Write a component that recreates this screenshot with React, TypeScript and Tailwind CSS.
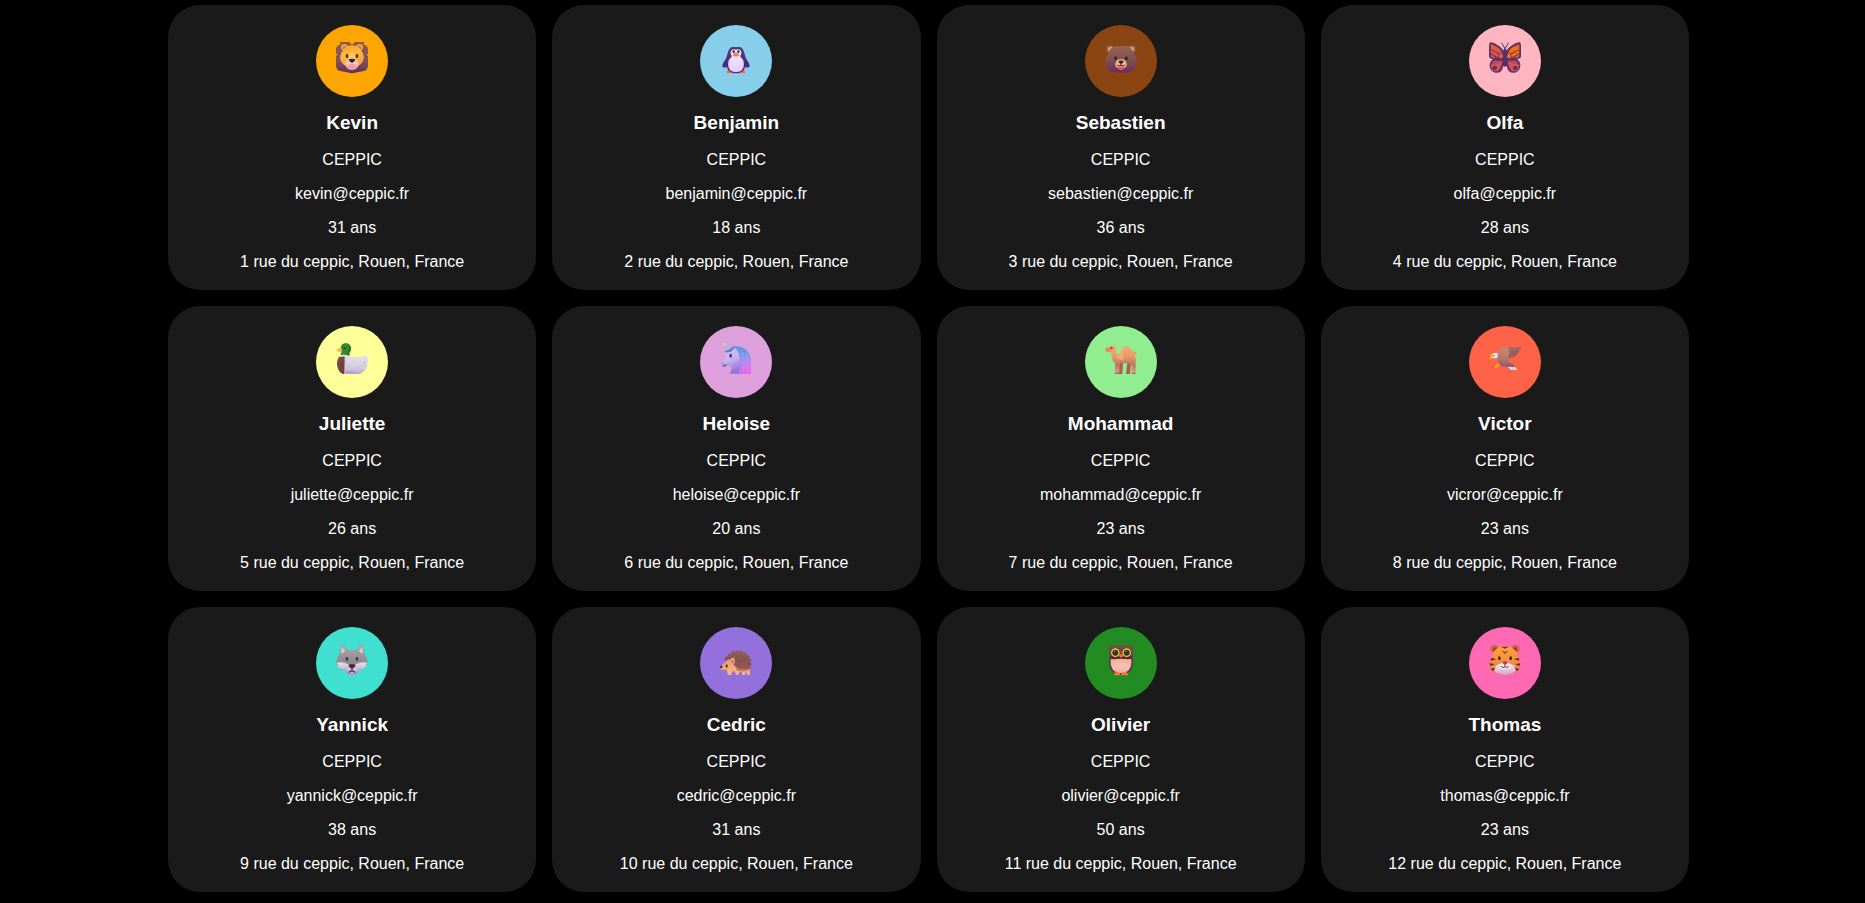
import type { ReactNode } from "react";

function Svg({ label, children }: { label: string; children: ReactNode }) {
  return (
    <svg viewBox="0 0 96 96" className="size-8" role="img" aria-label={label}>
      {children}
    </svg>
  );
}

type Stop = [string, string];

function Gradient({ id, stops, x2 = 0, y2 = 1 }: { id: string; stops: Stop[]; x2?: number; y2?: number }) {
  return (
    <linearGradient id={id} x1="0" y1="0" x2={x2} y2={y2}>
      {stops.map(([offset, color]) => (
        <stop key={offset} offset={offset} stopColor={color} />
      ))}
    </linearGradient>
  );
}

function Lion() {
  return (
    <Svg label="Lion">
      <Gradient id="lion-mane" stops={[["0", "#8a5a50"], ["0.6", "#83535a"], ["1", "#5f2f5e"]]} />
      <Gradient id="lion-face" stops={[["0", "#f2a02c"], ["0.5", "#ffb83c"], ["1", "#f79f3d"]]} x2={0.3} />
      <path d="M12 0H40L48 7L56 0H84V9Q94 10 96 20V35L90 38L96 41V72Q94 86 80 88Q70 89 64 91Q48 96 32 91Q26 89 16 88Q2 86 0 72V41L6 38L0 35V20Q2 10 12 9Z" fill="url(#lion-mane)" />
      <path d="M40 0L48 9L56 0Z" fill="#ffa500" />
      <circle cx="25" cy="16" r="10" fill="#f2a23c" />
      <circle cx="71" cy="16" r="10" fill="#f2a23c" />
      <circle cx="26" cy="18" r="5" fill="#c96f3e" />
      <circle cx="70" cy="18" r="5" fill="#c96f3e" />
      <path d="M48 10C66 9 78 23 83 42C85 53 79 66 66 72Q48 82 30 72C17 66 11 53 13 42C18 23 30 9 48 10Z" fill="url(#lion-face)" />
      <path d="M44 30Q48 27 52 30L59 55H37Z" fill="#ffc96a" />
      <ellipse cx="48" cy="67" rx="20" ry="17" fill="#f4b6ad" />
      <path d="M28 66Q30 51 48 53Q66 51 68 66Q48 74 28 66Z" fill="#f8c8bd" />
      <ellipse cx="48" cy="74" rx="12" ry="8" fill="#f29ba4" />
      <path d="M38 52Q48 48 58 52Q58 58 48 63Q38 58 38 52Z" fill="#34202f" />
      <ellipse cx="33" cy="42" rx="4" ry="6" fill="#4a2b2b" />
      <ellipse cx="63" cy="42" rx="4" ry="6" fill="#4a2b2b" />
    </Svg>
  );
}

function Penguin() {
  return (
    <Svg label="Penguin">
      <Gradient id="penguin-body" stops={[["0", "#573c78"], ["0.5", "#4c2c80"], ["1", "#4a1f86"]]} />
      <Gradient id="penguin-belly" stops={[["0", "#f8f2fc"], ["1", "#e2cdfa"]]} />
      <path d="M20 94Q20 84 29 82H67Q76 84 76 94Z" fill="#ff6e36" />
      <path d="M36 15H60Q69 18 72 30Q75 48 86 62Q91 72 87 76Q80 78 75 74Q74 92 48 94Q22 92 21 74Q16 78 9 76Q5 72 10 62Q21 48 24 30Q27 18 36 15Z" fill="url(#penguin-body)" />
      <path d="M48 23Q60 18 64 29Q65 37 60 43L70 55Q75 77 63 87Q48 94 33 87Q21 77 26 55L36 43Q31 37 32 29Q36 18 48 23Z" fill="url(#penguin-belly)" />
      <path d="M36 39Q48 45 60 39L63 43Q48 48 33 43Z" fill="#d9c5e9" />
      <circle cx="41" cy="29" r="4" fill="#433052" />
      <circle cx="55" cy="29" r="4" fill="#433052" />
      <path d="M38 38Q40 33 48 32Q56 33 58 38Q56 43 48 43Q40 43 38 38Z" fill="#ff7936" />
    </Svg>
  );
}

function Bear() {
  return (
    <Svg label="Bear">
      <Gradient id="bear-head" stops={[["0", "#966456"], ["0.55", "#7e504f"], ["1", "#6c2b68"]]} />
      <circle cx="15" cy="21" r="12" fill="#8d5c52" />
      <circle cx="81" cy="21" r="12" fill="#8d5c52" />
      <circle cx="17" cy="22" r="8" fill="#ec9d67" />
      <circle cx="79" cy="22" r="8" fill="#ec9d67" />
      <path d="M30 13H66Q79 15 86 33Q96 46 96 61Q95 81 80 88Q69 92 48 92Q27 92 16 88Q1 81 0 61Q0 46 10 33Q17 15 30 13Z" fill="url(#bear-head)" />
      <path d="M48 52Q63 52 65 65Q66 76 55 79Q48 81 41 79Q30 76 31 65Q33 52 48 52Z" fill="#f3b780" />
      <ellipse cx="32" cy="49" rx="4" ry="6" fill="#362136" />
      <ellipse cx="64" cy="49" rx="4" ry="6" fill="#362136" />
      <path d="M40 58Q48 53 56 58Q54 64 48 66Q42 64 40 58Z" fill="#321f2e" />
      <path d="M48 64V71M36 69Q42 75 48 70Q54 75 60 69" stroke="#4b2530" strokeWidth="3" fill="none" />
      <path d="M38 75Q48 73 58 75Q57 84 48 84Q39 84 38 75Z" fill="#e05b73" />
    </Svg>
  );
}

function Butterfly() {
  return (
    <Svg label="Butterfly">
      <Gradient id="butterfly-left" stops={[["0", "#f06040"], ["1", "#d84c50"]]} />
      <Gradient id="butterfly-right" stops={[["0", "#f04e45"], ["0.5", "#ff7200"], ["1", "#e45a3c"]]} />
      <path d="M48 20L58 3M48 20L38 3" stroke="#59366f" strokeWidth="3" strokeLinecap="round" />
      <path d="M5 0Q17 2 29 11Q40 18 44 27H52Q56 18 67 11Q79 2 91 0Q96 2 96 10V42Q96 50 84 52Q94 58 94 70Q94 88 78 92H70Q57 92 53 72H43Q39 92 26 92H18Q2 88 2 70Q2 58 12 52Q0 50 0 42V10Q0 2 5 0Z" fill="#593665" />
      <path d="M5 6Q27 14 37 27L33 36L5 22Z" fill="url(#butterfly-left)" />
      <path d="M5 25L31 38L25 46L5 32Z" fill="url(#butterfly-left)" />
      <path d="M5 35L21 47H9Q4 44 5 35Z" fill="#df5049" />
      <path d="M37 30L43 46Q37 52 28 46Z" fill="#ed583c" />
      <path d="M91 6Q69 14 59 27L63 36L91 22Z" fill="url(#butterfly-right)" />
      <path d="M91 25L65 38L71 46L91 32Z" fill="#ff7100" />
      <path d="M91 35L75 47H87Q92 44 91 35Z" fill="#e85b43" />
      <path d="M59 30L53 46Q59 52 68 46Z" fill="#ff6812" />
      <path d="M40 56Q38 76 27 87Q9 92 6 74Q5 61 18 56Z" fill="#e14e54" />
      <path d="M56 56Q58 76 69 87Q87 92 90 74Q91 61 78 56Z" fill="#e14e54" />
      <path d="M8 66L38 57M88 66L58 57" stroke="#704061" strokeWidth="2" />
      <circle cx="17" cy="78" r="7" fill="#593665" />
      <circle cx="79" cy="78" r="7" fill="#593665" />
      <path d="M43 24Q48 17 53 24L54 68Q52 74 48 74Q44 74 42 68Z" fill="#4e336c" />
    </Svg>
  );
}

function Duck() {
  return (
    <Svg label="Duck">
      <Gradient id="duck-body" stops={[["0", "#e7e1eb"], ["0.7", "#d4cadd"], ["1", "#b8a2cc"]]} />
      <Gradient id="duck-breast" stops={[["0", "#82513f"], ["1", "#61343f"]]} x2={1} />
      <path d="M12 39Q2 49 3 65Q6 87 21 93H37V39Z" fill="url(#duck-breast)" />
      <path d="M26 41H70Q82 42 85 38Q92 35 95 43Q97 62 91 74Q84 88 71 93H25Z" fill="url(#duck-body)" />
      <path d="M28 45Q27 71 44 75Q74 80 89 55" fill="none" stroke="#c9bcd5" strokeWidth="2" />
      <path d="M24 84Q49 80 71 93H24Z" fill="#b7a2cb" />
      <path d="M30 0Q44 2 45 17Q44 23 40 29V40H14Q13 31 17 26L14 14Q16 1 30 0Z" fill="#338c27" />
      <path d="M35 3Q43 14 34 26V39H40V29Q45 25 45 17Q45 6 35 3Z" fill="#2a7528" />
      <path d="M13 11L18 19L15 27Q9 28 3 24Q-1 20 2 18L8 17Z" fill="#f8bd48" />
      <circle cx="25" cy="16" r="3" fill="#203c21" />
      <path d="M12 37Q22 33 40 38V43Q21 39 11 42Z" fill="#f0eaf0" />
    </Svg>
  );
}

function Unicorn() {
  return (
    <Svg label="Unicorn">
      <Gradient id="unicorn-mane" stops={[["0", "#5292dc"], ["0.3", "#7b9ced"], ["0.6", "#c784ee"], ["1", "#f25fe6"]]} />
      <Gradient id="unicorn-face" stops={[["0", "#d9cdf6"], ["0.6", "#c5b0ee"], ["1", "#9279d8"]]} x2={0.3} />
      <Gradient id="unicorn-horn" stops={[["0", "#ffe15a"], ["0.45", "#67d9cc"], ["0.7", "#f0a0c8"], ["1", "#6c8be9"]]} x2={1} />
      <path d="M44 10Q68 10 81 23Q93 36 93 56V93H50Q58 68 46 34Z" fill="url(#unicorn-mane)" />
      <path d="M36 22L39 10L48 19Q61 33 59 57L56 93H29Q36 82 33 70Q26 67 20 70Q12 76 5 71Q-1 66 3 60L14 49L20 33Q26 23 36 22Z" fill="url(#unicorn-face)" />
      <path d="M8 0Q12 -2 16 1L31 17L22 23Z" fill="url(#unicorn-horn)" />
      <path d="M35 14Q28 22 14 24Q17 29 25 28Q34 28 39 20L46 10Q40 9 35 14Z" fill="#4a86d8" />
      <path d="M48 10Q63 26 63 52Q64 70 58 93" fill="none" stroke="#8a93ee" strokeWidth="5" opacity=".6" />
      <path d="M68 28Q74 62 70 93M79 33Q86 62 82 93" fill="none" stroke="#b79bf2" strokeWidth="3" opacity=".6" />
      <ellipse cx="32" cy="38" rx="4" ry="6" fill="#453763" />
      <ellipse cx="8" cy="61" rx="3" ry="2" fill="#8453b5" />
      <path d="M8 69Q18 70 20 63" fill="none" stroke="#533771" strokeWidth="3" />
    </Svg>
  );
}

function Camel() {
  return (
    <Svg label="Camel">
      <Gradient id="camel-body" stops={[["0", "#f5b06d"], ["0.45", "#e69b67"], ["0.7", "#bf7560"], ["1", "#e5a180"]]} />
      <path d="M42 58H54L52 93H40ZM67 59H78L75 93H63Z" fill="#a7604b" />
      <path d="M28 0L32 9Q35 17 33 28Q34 38 42 32Q51 10 62 9Q74 9 80 24Q93 25 96 32L93 37Q92 34 89 34Q94 45 92 58V93H80V66L69 61H45L42 93H30V61Q21 54 20 42Q20 32 17 27L4 26Q-1 22 1 16L15 9Q22 10 27 7Z" fill="url(#camel-body)" />
      <path d="M42 32Q47 16 60 15Q51 27 54 50Q47 54 37 45Z" fill="#f9bb78" opacity=".6" />
      <path d="M1 18L15 12L18 24L5 26Z" fill="#d8895d" />
      <circle cx="20" cy="15" r="3" fill="#57341f" />
      <path d="M30 89H42V93H30ZM80 89H92V93H80Z" fill="#a06a51" />
    </Svg>
  );
}

function Eagle() {
  return (
    <Svg label="Eagle">
      <Gradient id="eagle-wing" stops={[["0", "#ad7466"], ["1", "#905a5c"]]} x2={1} />
      <Gradient id="eagle-body" stops={[["0", "#c78973"], ["0.6", "#b67668"], ["1", "#8b5570"]]} />
      <path d="M25 60L37 65L29 69L25 74L19 75L17 69L22 66Z" fill="#f8a719" />
      <path d="M54 69H76L85 81H66Z" fill="#ded6ed" />
      <path d="M15 30H30V46H8Q5 41 7 36Q9 31 15 30Z" fill="#ece3ef" />
      <path d="M10 33L5 35Q-1 41 2 51Q5 47 10 46L11 38Z" fill="#ffb00a" />
      <path d="M40 14Q52 10 96 13Q97 19 91 24Q89 31 84 34Q81 40 74 43L58 47L45 40Z" fill="url(#eagle-wing)" />
      <path d="M26 33Q30 12 52 12Q62 13 60 32Q55 49 61 57L79 69L74 72L44 71Q27 66 25 50Z" fill="url(#eagle-body)" />
      <path d="M62 27L88 26M61 35L82 34" stroke="#834d52" strokeWidth="2" opacity=".7" />
      <path d="M68 71L74 80" stroke="#b8a5d0" strokeWidth="2" />
      <circle cx="14" cy="38" r="2" fill="#3a2b44" />
    </Svg>
  );
}

function Wolf() {
  return (
    <Svg label="Wolf">
      <Gradient id="wolf-head" stops={[["0", "#afa9ad"], ["0.6", "#8d898e"], ["1", "#777178"]]} />
      <Gradient id="wolf-muzzle" stops={[["0", "#e8ddec"], ["1", "#b397c4"]]} />
      <path d="M17 0Q25 4 34 18H62Q71 4 79 0Q84 5 86 31Q94 43 96 57L89 61L92 70Q82 77 65 78Q67 90 56 93H40Q29 90 31 78Q14 77 4 70L7 61L0 57Q2 43 10 31Q12 5 17 0Z" fill="url(#wolf-head)" />
      <path d="M18 8L28 21L15 29ZM78 8L68 21L81 29Z" fill="#d8ced7" />
      <path d="M0 57Q19 51 35 60Q42 66 48 66Q54 66 61 60Q77 51 96 57L89 61L92 69Q81 77 65 78Q67 90 56 93H40Q29 90 31 78Q14 77 4 70L7 61Z" fill="url(#wolf-muzzle)" />
      <path d="M31 78Q35 67 48 66Q61 67 65 78Q61 83 57 79L48 75L39 79Q35 83 31 78Z" fill="#d4bddc" />
      <ellipse cx="33" cy="45" rx="4" ry="6" fill="#493341" />
      <ellipse cx="63" cy="45" rx="4" ry="6" fill="#493341" />
      <path d="M38 62Q48 58 58 62Q59 70 48 74Q37 70 38 62Z" fill="#443039" />
      <path d="M48 73V80M38 85L48 80L58 85" stroke="#4f354b" strokeWidth="4" fill="none" />
    </Svg>
  );
}

function Hedgehog() {
  return (
    <Svg label="Hedgehog">
      <Gradient id="hedgehog-spines" stops={[["0", "#92605a"], ["0.5", "#855252"], ["1", "#9a574f"]]} />
      <Gradient id="hedgehog-face" stops={[["0", "#e19a72"], ["1", "#ffb781"]]} />
      <path d="M26 44Q18 55 3 66Q-1 70 2 75Q9 81 22 82L23 93H33L37 82H44L48 92H55L59 83H65L67 93H74L78 82L82 93H90L88 64Q57 33 26 44Z" fill="url(#hedgehog-face)" />
      <path d="M14 51L15 39L23 37L25 29L33 29L38 20L46 24L52 18L59 22L66 19L70 26L79 25L81 33L89 35L88 43L95 48L90 54L96 61L90 65L94 72L85 76Q54 80 42 64L37 48L27 46Z" fill="url(#hedgehog-spines)" />
      <path d="M51 26L54 30L59 26M70 34L74 38L79 34M59 43L63 47L68 43M75 51L79 54L84 50M47 54L51 59L56 55M62 64L66 68L71 64M39 36L43 40L48 36" fill="none" stroke="#a87263" strokeWidth="2" opacity=".6" />
      <path d="M47 70Q64 82 86 73L85 79Q65 86 48 77Z" fill="#c66f60" />
      <ellipse cx="38" cy="51" rx="7" ry="10" fill="#f0a476" />
      <ellipse cx="38" cy="53" rx="3" ry="5" fill="#b57056" />
      <ellipse cx="20" cy="66" rx="3" ry="5" fill="#412731" />
      <circle cx="4" cy="69" r="4" fill="#4a2932" />
      <path d="M11 78Q16 81 21 76" fill="none" stroke="#74403b" strokeWidth="2" />
    </Svg>
  );
}

function Owl() {
  return (
    <Svg label="Owl">
      <Gradient id="owl-body" stops={[["0", "#745044"], ["0.5", "#69424a"], ["1", "#572e43"]]} />
      <Gradient id="owl-belly" stops={[["0", "#f1ad98"], ["0.5", "#f9c3ae"], ["1", "#eaaba0"]]} />
      <path d="M12 2Q23 8 34 2Q48 6 62 2Q73 8 84 0V42Q87 60 78 79Q68 90 60 90H36Q28 90 18 79Q9 60 12 42Z" fill="url(#owl-body)" />
      <path d="M18 45H78Q82 66 70 80Q60 88 48 88Q36 88 26 80Q14 66 18 45Z" fill="url(#owl-belly)" />
      <path d="M14 37H82Q80 49 63 45L48 42L33 45Q16 49 14 37Z" fill="#52283f" />
      <circle cx="31" cy="26" r="14" fill="#503f3d" />
      <circle cx="65" cy="26" r="14" fill="#503f3d" />
      <circle cx="31" cy="26" r="11" fill="none" stroke="#f3cd24" strokeWidth="4" />
      <circle cx="65" cy="26" r="11" fill="none" stroke="#f3cd24" strokeWidth="4" />
      <circle cx="31" cy="26" r="8" fill="#30313b" />
      <circle cx="65" cy="26" r="8" fill="#30313b" />
      <circle cx="29" cy="22" r="2" fill="#8ca27b" />
      <circle cx="63" cy="22" r="2" fill="#8ca27b" />
      <path d="M40 35L48 29L56 35L48 41Z" fill="#ff6c36" />
      <path d="M27 94Q27 84 36 83Q45 84 46 94ZM49 94Q50 84 60 83Q69 84 69 94Z" fill="#ff7240" />
    </Svg>
  );
}

function Tiger() {
  return (
    <Svg label="Tiger">
      <Gradient id="tiger-face" stops={[["0", "#ffa136"], ["0.6", "#f68d3b"], ["1", "#e78355"]]} />
      <Gradient id="tiger-muzzle" stops={[["0", "#f8e6eb"], ["1", "#d2abc8"]]} />
      <circle cx="16" cy="14" r="12" fill="#df6540" />
      <circle cx="80" cy="14" r="12" fill="#df6540" />
      <circle cx="18" cy="16" r="7" fill="#8a4a48" />
      <circle cx="78" cy="16" r="7" fill="#8a4a48" />
      <path d="M27 11Q48 1 69 11Q86 21 88 43L96 60L91 65L94 75Q78 90 48 91Q18 90 2 75L5 65L0 60L8 43Q10 21 27 11Z" fill="url(#tiger-face)" />
      <path d="M20 66Q30 56 48 58Q66 56 76 66L80 80Q68 91 48 92Q28 91 16 80Z" fill="url(#tiger-muzzle)" />
      <path d="M31 65Q36 54 48 54Q60 54 65 65Q66 75 54 76L48 74L42 76Q30 75 31 65Z" fill="#f8e9ed" />
      <path d="M36 8H60L48 14ZM38 20L48 24L58 20L48 29ZM7 41L22 46L5 50ZM89 41L74 46L91 50ZM1 58L18 60L5 66ZM95 58L78 60L91 66ZM5 74L19 72L12 82ZM91 74L77 72L84 82Z" fill="#563045" />
      <ellipse cx="31" cy="43" rx="4" ry="6" fill="#422738" />
      <ellipse cx="65" cy="43" rx="4" ry="6" fill="#422738" />
      <path d="M40 54Q48 50 56 54Q55 60 48 64Q41 60 40 54Z" fill="#a34459" />
      <path d="M48 63V68M36 67Q42 74 48 68Q54 74 60 67" fill="none" stroke="#694057" strokeWidth="3" />
    </Svg>
  );
}

interface Person {
  name: string;
  email: string;
  age: number;
  color: string;
  icon: ReactNode;
}

const people: Person[] = [
  { name: "Kevin", email: "kevin@ceppic.fr", age: 31, color: "bg-[#ffa500]", icon: <Lion /> },
  { name: "Benjamin", email: "benjamin@ceppic.fr", age: 18, color: "bg-[#87ceeb]", icon: <Penguin /> },
  { name: "Sebastien", email: "sebastien@ceppic.fr", age: 36, color: "bg-[#8b4513]", icon: <Bear /> },
  { name: "Olfa", email: "olfa@ceppic.fr", age: 28, color: "bg-[#ffb6c1]", icon: <Butterfly /> },
  { name: "Juliette", email: "juliette@ceppic.fr", age: 26, color: "bg-[#ffff99]", icon: <Duck /> },
  { name: "Heloise", email: "heloise@ceppic.fr", age: 20, color: "bg-[#dda0dd]", icon: <Unicorn /> },
  { name: "Mohammad", email: "mohammad@ceppic.fr", age: 23, color: "bg-[#90ee90]", icon: <Camel /> },
  { name: "Victor", email: "vicror@ceppic.fr", age: 23, color: "bg-[#ff6347]", icon: <Eagle /> },
  { name: "Yannick", email: "yannick@ceppic.fr", age: 38, color: "bg-[#40e0d0]", icon: <Wolf /> },
  { name: "Cedric", email: "cedric@ceppic.fr", age: 31, color: "bg-[#9370db]", icon: <Hedgehog /> },
  { name: "Olivier", email: "olivier@ceppic.fr", age: 50, color: "bg-[#228b22]", icon: <Owl /> },
  { name: "Thomas", email: "thomas@ceppic.fr", age: 23, color: "bg-[#ff69b4]", icon: <Tiger /> },
];

function PersonCard({ person, number }: { person: Person; number: number }) {
  return (
    <article className="flex flex-col items-center rounded-[32px] bg-[#1a1a1a] px-4 pt-5 pb-[15px] text-center">
      <div className={`flex size-18 justify-center rounded-full pt-[17px] ${person.color}`}>{person.icon}</div>
      <h2 className="mt-[10px] text-[19px] leading-8 font-bold">{person.name}</h2>
      <div className="mt-2 flex flex-col gap-2 text-base leading-[26px]">
        <p>CEPPIC</p>
        <p>{person.email}</p>
        <p>{person.age} ans</p>
        <p>{number} rue du ceppic, Rouen, France</p>
      </div>
    </article>
  );
}

export default function App() {
  return (
    <main className="min-h-screen bg-black pt-[5px] pr-44 pb-[10px] pl-42 font-['Liberation_Sans',Arial,sans-serif] text-white">
      <div className="grid grid-cols-4 gap-4">
        {people.map((person, index) => (
          <PersonCard key={person.name} person={person} number={index + 1} />
        ))}
      </div>
    </main>
  );
}
